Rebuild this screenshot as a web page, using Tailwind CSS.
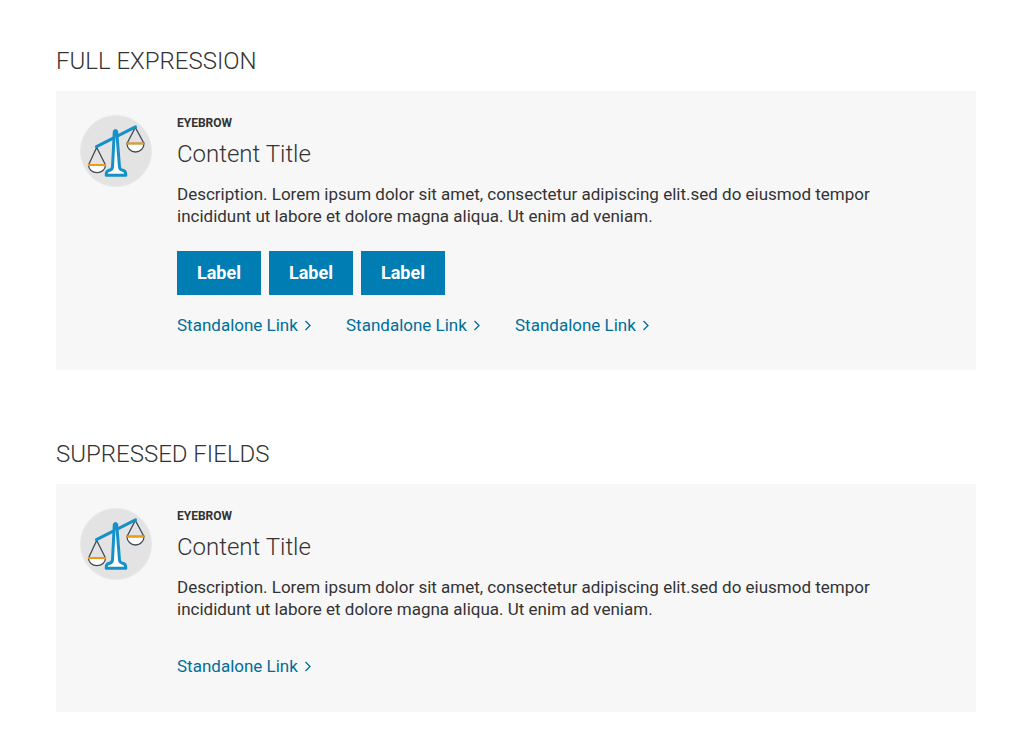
<!DOCTYPE html>
<html lang="en">
<head>
    <meta charset="UTF-8">
    <meta name="viewport" content="width=device-width, initial-scale=1.0">
    <title>Content Card</title>
    <script src="https://cdn.jsdelivr.net/npm/@tailwindcss/browser@4"></script>
</head>
<body class="bg-white text-[#333333] font-['Roboto',sans-serif]">

    <!-- Icons shared by both cards -->
    <svg class="hidden" aria-hidden="true">
        <symbol id="scales" viewBox="0 0 72 72">
            <circle cx="36" cy="36" r="35.5" fill="#e3e3e3" stroke="#e8e8e8"/>
            <path d="M8.500 50h17a8.500 7.700 0 0 1-17 0zM47 28.500h17a8.500 8.500 0 0 1-17 0z" fill="#fff" stroke="#414b56" stroke-width="1.300"/>
            <path d="M8.500 50l8.200-17.500L25.500 50M47 28.500l8.300-16L64 28.500" fill="none" stroke="#414b56" stroke-width="1.300"/>
            <path d="M8 50h18M46.500 28.500h18" stroke="#eb9b18" stroke-width="1.800"/>
            <path d="M16.500 31.700L55.500 11.900" stroke="#1590c8" stroke-width="3" stroke-linecap="round"/>
            <path d="M34.300 16.500q1.200-1.800 2.400 0L39.500 52q.3 3 4 3.500 2.300.6 2.300 4.700H26.200q0-4.100 2.300-4.700 3.700-.5 4-3.500z" fill="#fff" stroke="#1590c8" stroke-width="3" stroke-linejoin="round"/>
        </symbol>
        <symbol id="chevron" viewBox="0 0 12 12">
            <path d="M3.500 2l4.500 4.500L3.500 11" fill="none" stroke="currentColor" stroke-width="1.300"/>
        </symbol>
    </svg>

    <main class="pl-14 pr-[55px]">

        <!-- Full Expression -->
        <section class="pt-[45px]">
            <h2 class="text-2xl font-light">FULL EXPRESSION</h2>
            <div class="mt-[14px] bg-[#f7f7f7] px-6 pt-6 pb-[34px] flex gap-[25px]">
                <svg class="size-[72px] shrink-0" role="img" aria-label="Scales"><use href="#scales"/></svg>
                <div>
                    <p class="text-xs font-bold">EYEBROW</p>
                    <h3 class="mt-[7px] text-2xl font-light">Content Title</h3>
                    <p class="mt-[13px] max-w-[720px] text-[17px] leading-[22px]">Description. Lorem ipsum dolor sit amet, consectetur adipiscing elit.sed do eiusmod tempor incididunt ut labore et dolore magna aliqua. Ut enim ad veniam.</p>
                    <div class="mt-6 flex gap-2">
                        <button type="button" class="w-[84px] h-11 bg-[#007db3] text-white text-lg font-bold">Label</button>
                        <button type="button" class="w-[84px] h-11 bg-[#007db3] text-white text-lg font-bold">Label</button>
                        <button type="button" class="w-[84px] h-11 bg-[#007db3] text-white text-lg font-bold">Label</button>
                    </div>
                    <div class="mt-[19px] flex gap-[33px] text-[17px] leading-[22px] text-[#006e9a]">
                        <a href="#" class="w-[136px] flex items-center gap-1 whitespace-nowrap hover:underline">Standalone Link
                            <svg class="size-3 shrink-0"><use href="#chevron"/></svg>
                        </a>
                        <a href="#" class="w-[136px] flex items-center gap-1 whitespace-nowrap hover:underline">Standalone Link
                            <svg class="size-3 shrink-0"><use href="#chevron"/></svg>
                        </a>
                        <a href="#" class="w-[136px] flex items-center gap-1 whitespace-nowrap hover:underline">Standalone Link
                            <svg class="size-3 shrink-0"><use href="#chevron"/></svg>
                        </a>
                    </div>
                </div>
            </div>
        </section>

        <!-- Suppressed Fields -->
        <section class="pt-17">
            <h2 class="text-2xl font-light">SUPRESSED FIELDS</h2>
            <div class="mt-[14px] bg-[#f7f7f7] px-6 pt-6 pb-[35px] flex gap-[25px]">
                <svg class="size-[72px] shrink-0" role="img" aria-label="Scales"><use href="#scales"/></svg>
                <div>
                    <p class="text-xs font-bold">EYEBROW</p>
                    <h3 class="mt-[7px] text-2xl font-light">Content Title</h3>
                    <p class="mt-[13px] max-w-[720px] text-[17px] leading-[22px]">Description. Lorem ipsum dolor sit amet, consectetur adipiscing elit.sed do eiusmod tempor incididunt ut labore et dolore magna aliqua. Ut enim ad veniam.</p>
                    <div class="mt-[35px] flex gap-[33px] text-[17px] leading-[22px] text-[#006e9a]">
                        <a href="#" class="w-[136px] flex items-center gap-1 whitespace-nowrap hover:underline">Standalone Link
                            <svg class="size-3 shrink-0"><use href="#chevron"/></svg>
                        </a>
                    </div>
                </div>
            </div>
        </section>

    </main>

</body>
</html>
